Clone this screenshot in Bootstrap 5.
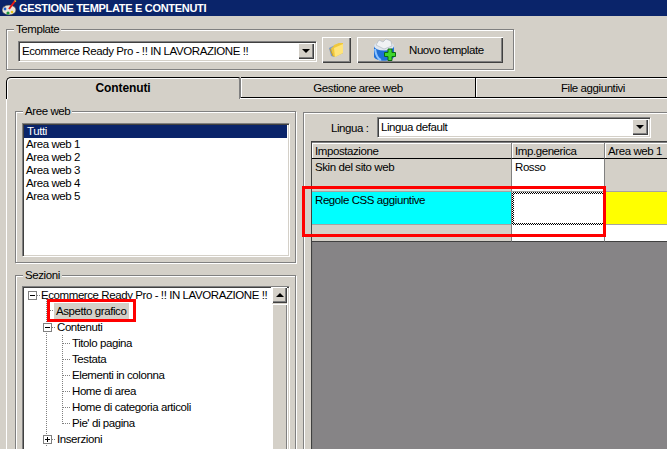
<!DOCTYPE html>
<html lang="it"><head><meta charset="utf-8"><title>Gestione template</title>
<link href="https://cdn.jsdelivr.net/npm/bootstrap@5.3.0/dist/css/bootstrap.min.css" rel="stylesheet">
<style>
html,body{height:449px;overflow:hidden}
body{background:#d4d0c8;color:#000;font:11.5px/13px "Liberation Sans",Arial,sans-serif;letter-spacing:-.42px}
.titlebar{height:16px;flex:none;background:#0a246a;color:#fff;font-weight:700;font-size:11px;line-height:16px;letter-spacing:-.3px;padding-left:2px}
.titlebar svg{margin-right:2px;flex:none}
.gbox{border:1px solid #808080;box-shadow:1px 1px 0 #fff,inset 1px 1px 0 #fff;margin:0;min-width:0}
.gbox>legend{float:none;width:auto;font-size:11.5px;line-height:12px;margin:0 0 0 1px;padding:0 2px;background:#d4d0c8;position:relative;z-index:1}
.tplbox{margin:7px 0 0 6px;width:508px;height:47px;flex:none;padding:2px 0 0 11px}
.tplbox>legend{margin-left:-4px}
.tplrow{gap:6px}
.sunken{background:#fff;box-shadow:inset 1px 1px 0 #808080,inset 2px 2px 0 #404040,inset -1px -1px 0 #d4d0c8,1px 1px 0 #fff}
.combo{height:20px;padding:4px 2px 0 4px;white-space:nowrap}
.tplcombo{width:298px;margin-top:4px}
.arrbtn{width:16px;height:16px;background:#d4d0c8;box-shadow:inset 1px 1px 0 #fff,inset -1px -1px 0 #404040,inset -2px -2px 0 #808080;margin-top:-2px;flex:none}
.arrbtn::after{content:"";width:0;height:0;border:4px solid transparent;border-top:4px solid #000;border-bottom:0}
.wbtn{height:26px;background:#d4d0c8;box-shadow:inset 1px 1px 0 #fff,inset -1px -1px 0 #404040,inset -2px -2px 0 #808080;letter-spacing:inherit;font-size:11.5px}
.folderbtn{width:29px}
.newbtn{width:146px}
.newbtn span{padding-top:1px}
.newicon{flex:none;margin:0 12px 0 16px}
.tabsbar{margin:7px 0 0 6px;height:22px;flex:none;flex-wrap:nowrap;border:0;overflow:hidden;--bs-nav-tabs-border-width:0}
.tabsbar .nav-item{flex:none;width:235px}
.tabsbar .nav-link{display:block;height:21px;padding:3px 0 0;color:#000;text-align:center;border:0;border-radius:0;background:#d4d0c8;margin:0;
 border-top:1px solid #000;border-bottom:1px solid #000;border-right:1px solid #000;box-shadow:inset 1px 1px 0 #fff;font-size:11.5px;line-height:15px}
.tabsbar .nav-link.active{font-weight:700;font-size:12px;letter-spacing:-.1px;height:22px;border:0;border-top:1px solid #000;border-left:1px solid #000;border-right:2px solid #808080;border-radius:5px 3px 0 0;box-shadow:inset 1px 1px 0 #fff;background:#d4d0c8;color:#000}
.tabrule{height:1px;flex:none;background:#fff;margin:-1px 0 0 240px;position:relative;z-index:1}
.tabpage{margin-left:6px;border-left:1px solid #fff;padding:6px 0 0 8px;gap:7px;flex:1 1 0;min-height:0;overflow:hidden}
.leftcol{width:281px;flex:none;gap:6px}
.areabox{height:158px;flex:none;padding:6px 6px 0}
.areaslist{height:133px;padding:2px;overflow:hidden}
.arow{height:13px;padding-left:2px;line-height:13px}
.arow.sel{background:#0a246a;color:#fff;padding-left:3px}
.secbox{height:180px;flex:none;padding:5px 6px 0;border-bottom:0;overflow:hidden}
.treebox{height:170px;padding:1px 0 0 2px}
.treepane{flex:1 1 0;min-width:0;overflow:hidden}
.troot,.tnode{height:16px;line-height:16px;white-space:nowrap}
.troot{padding-left:4px}
.troot .shortd{margin-right:1px}
.tlv1{padding-left:19px}
.kids{padding-left:38px;background:repeating-linear-gradient(#808080 0 1px,transparent 1px 2px) 38px 0/1px 88px no-repeat}
.trunk{background:repeating-linear-gradient(#808080 0 1px,transparent 1px 2px) 22px 0/1px 100% no-repeat}
.tbx{width:9px;height:9px;border:1px solid #808080;background:#fff;position:relative;flex:none}
.tbx::before{content:"";position:absolute;left:1px;right:1px;top:3px;height:1px;background:#000}
.tbx.pl::after{content:"";position:absolute;top:1px;bottom:1px;left:3px;width:1px;background:#000}
.dots{width:8px;border-top:1px dotted #808080;height:0;flex:none;margin-right:2px}
.dots.shortd{width:3px}
.aspframe .dots.shortd{margin-right:0}
.selgrey{background:#d4d0c8;padding:0 2px;height:16px;line-height:16px;margin-left:1px;width:75px;white-space:nowrap;flex:none}
.redframe{border:3px solid #f00}
.aspframe{margin:-4px 0 -3px 23px;width:89px;height:23px;position:relative;z-index:2}
.sbar{width:15px;flex:none;background:#d4d0c8;box-shadow:-1px 0 0 #fff;margin-right:2px}
.sbtn{height:16px;background:#d4d0c8;box-shadow:inset 1px 1px 0 #fff,inset -1px -1px 0 #404040,inset -2px -2px 0 #808080}
.sbtn::after{content:"";width:0;height:0;border:4px solid transparent;border-bottom:4px solid #000;border-top:0}
.sthumb{flex:1;margin-top:1px;background:#d4d0c8;box-shadow:inset 1px 1px 0 #fff,inset -1px 0 0 #808080}
.rightbox{flex:1 1 0;min-width:0;height:337px;margin-top:7px;padding:0 0 0 7px;border-right:0;border-bottom:0}
.lingrow{height:28px;flex:none;padding-top:4px}
.lingrow label{width:66px;padding:5px 0 0 20px;margin:0}
.lingcombo{width:273px;height:20px;padding:4px 2px 0 4px}
.griddark{height:100%;background:#868486;box-shadow:inset 1px 1px 0 #404040,inset 2px 2px 0 #808080;padding:2px 0 0 1px;overflow:hidden}
.gtable{table-layout:fixed;width:360px;margin:0;border-collapse:separate;border-spacing:0;--bs-table-bg:transparent;font-size:11.5px}
.gtable .c1{width:200px}.gtable .c2{width:93px}.gtable .c3{width:67px}
.gtable>*>tr>*{padding:1px 3px 0;border:0;border-right:1px solid #808080;border-bottom:1px solid #a6a3a0;vertical-align:top;line-height:14px;background:#d4d0c8;box-shadow:none;color:#000}
.gtable>thead>tr>th{font-weight:400;height:16px;box-shadow:inset 1px 1px 0 #fff;border-bottom:1px solid #000;padding-top:1px}
.gtable .rh1{height:33px}.gtable .rh2{height:33px}.gtable .rh3{height:17px}
.gtable>tbody>tr>td.cw{background:#fff}
.gtable>tbody>tr>td.cc{background:#0ff}
.gtable>tbody>tr>td.cy{background:#ff0}
.gtable>tbody>tr>td.cfoc{border:2px solid transparent;background:linear-gradient(#fff,#fff) padding-box,repeating-conic-gradient(#000 0 25%,#fff 0 50%) 0 0/2px 2px border-box}
.gtable>tbody>tr:last-child>td{border-bottom-color:#404040}
.gridwrap{flex:1 1 0;min-height:0;position:relative}
.redtable{position:absolute;left:-9px;top:45px;width:304px;height:51px;pointer-events:none;z-index:2}
</style></head>
<body class="d-flex flex-column">
<div class="titlebar d-flex align-items-center">
<svg width="15" height="16" viewBox="0 0 15 16"><ellipse cx="7" cy="10" rx="7" ry="5" fill="#e8e4da"/><ellipse cx="7" cy="10" rx="7" ry="5" fill="none" stroke="#333" stroke-width=".6"/><circle cx="3" cy="9" r="1.4" fill="#1d5fd0"/><circle cx="6" cy="13" r="1.6" fill="#1a9a3c"/><circle cx="10" cy="12" r="1.3" fill="#e8c31a"/><path d="M7 9 13 1" stroke="#e01818" stroke-width="2"/><path d="M12.5 0.5 14 1.5" stroke="#f5d020" stroke-width="1.4"/></svg>
GESTIONE TEMPLATE E CONTENUTI</div>

<fieldset class="gbox tplbox">
<legend>Template</legend>
<div class="tplrow d-flex align-items-start">
<div class="sunken combo tplcombo d-flex justify-content-between">Ecommerce Ready Pro - !! IN LAVORAZIONE !!<span class="arrbtn d-flex align-items-center justify-content-center"></span></div>
<button class="wbtn folderbtn border-0 d-flex align-items-center justify-content-center p-0" aria-label="Apri">
<svg width="17" height="16" viewBox="0 0 17 16"><path d="M1 6 3 5 12 1 14 1 15 11 6 15 3 14Z" fill="#7d9ac8"/><path d="M3 6 5 5 6 3 11 1 15 1 15 11 7 15 5 14Z" fill="#f0c83c"/><path d="M6 6 15 2 15 11 7 15Z" fill="#ffe47a"/><path d="M2 7 5 14" stroke="#d0a020"/></svg></button>
<button class="wbtn newbtn border-0 d-flex align-items-center p-0">
<svg class="newicon" width="24" height="24" viewBox="0 0 24 24"><path d="M1 9C3 3 18 3 21 9L21 19C18 24 4 24 1 19Z" fill="#1f6fd6"/><ellipse cx="11" cy="8" rx="10" ry="4.5" fill="#dfe6ee"/><path d="M3 7 6 2 10 4 13 1 18 3 19 8 11 11Z" fill="#f0f2f4" stroke="#a8b0bc" stroke-width=".6"/><path d="M2 11C3 18 5 21 8 22" stroke="#8fc4ff" stroke-width="2" fill="none"/><path d="M15 11H19V14.500H22.500V18.500H19V22.500H15V18.500H11.500V14.500H15Z" fill="#3ed62c" stroke="#0c6a10"/></svg>
<span>Nuovo template</span></button>
</div>
</fieldset>

<ul class="nav nav-tabs tabsbar">
<li class="nav-item"><a class="nav-link active" href="#">Contenuti</a></li>
<li class="nav-item"><a class="nav-link" href="#">Gestione aree web</a></li>
<li class="nav-item"><a class="nav-link" href="#">File aggiuntivi</a></li>
</ul>
<div class="tabrule"></div>

<div class="tabpage d-flex">
<div class="leftcol d-flex flex-column">
<fieldset class="gbox areabox"><legend>Aree web</legend>
<div class="sunken areaslist">
<div class="arow sel">Tutti</div>
<div class="arow">Area web 1</div><div class="arow">Area web 2</div><div class="arow">Area web 3</div><div class="arow">Area web 4</div><div class="arow">Area web 5</div>
</div></fieldset>
<fieldset class="gbox secbox"><legend>Sezioni</legend>
<div class="sunken treebox d-flex">
<div class="treepane">
<div class="troot d-flex align-items-center"><span class="tbx"></span><span class="dots shortd"></span>Ecommerce Ready Pro - !! IN LAVORAZIONE !!</div>
<div class="trunk">
<div class="redframe aspframe d-flex align-items-center"><span class="dots shortd"></span><span class="selgrey">Aspetto grafico</span></div>
<div class="tnode tlv1 d-flex align-items-center"><span class="tbx"></span><span class="dots shortd"></span>Contenuti</div>
<div class="kids">
<div class="tnode d-flex align-items-center"><span class="dots"></span>Titolo pagina</div>
<div class="tnode d-flex align-items-center"><span class="dots"></span>Testata</div>
<div class="tnode d-flex align-items-center"><span class="dots"></span>Elementi in colonna</div>
<div class="tnode d-flex align-items-center"><span class="dots"></span>Home di area</div>
<div class="tnode d-flex align-items-center"><span class="dots"></span>Home di categoria articoli</div>
<div class="tnode d-flex align-items-center"><span class="dots"></span>Pie' di pagina</div>
</div>
<div class="tnode tlv1 d-flex align-items-center"><span class="tbx pl"></span><span class="dots shortd"></span>Inserzioni</div>
</div>
</div>
<div class="sbar d-flex flex-column"><div class="sbtn d-flex align-items-center justify-content-center"></div><div class="sthumb"></div></div>
</div></fieldset>
</div>
<fieldset class="gbox rightbox d-flex flex-column">
<div class="lingrow d-flex"><label>Lingua :</label><div class="sunken lingcombo d-flex justify-content-between">Lingua default<span class="arrbtn d-flex align-items-center justify-content-center"></span></div></div>
<div class="gridwrap">
<div class="griddark">
<table class="table gtable"><colgroup><col class="c1"><col class="c2"><col class="c3"></colgroup>
<thead><tr><th>Impostazione</th><th>Imp.generica</th><th>Area web 1</th></tr></thead>
<tbody>
<tr class="rh1"><td>Skin del sito web</td><td class="cw">Rosso</td><td></td></tr>
<tr class="rh2"><td class="cc">Regole CSS aggiuntive</td><td class="cfoc"></td><td class="cy"></td></tr>
<tr class="rh3"><td></td><td class="cw"></td><td class="cw"></td></tr>
</tbody></table>
</div>
<div class="redframe redtable"></div>
</div>
</fieldset>
</div>
</body></html>
